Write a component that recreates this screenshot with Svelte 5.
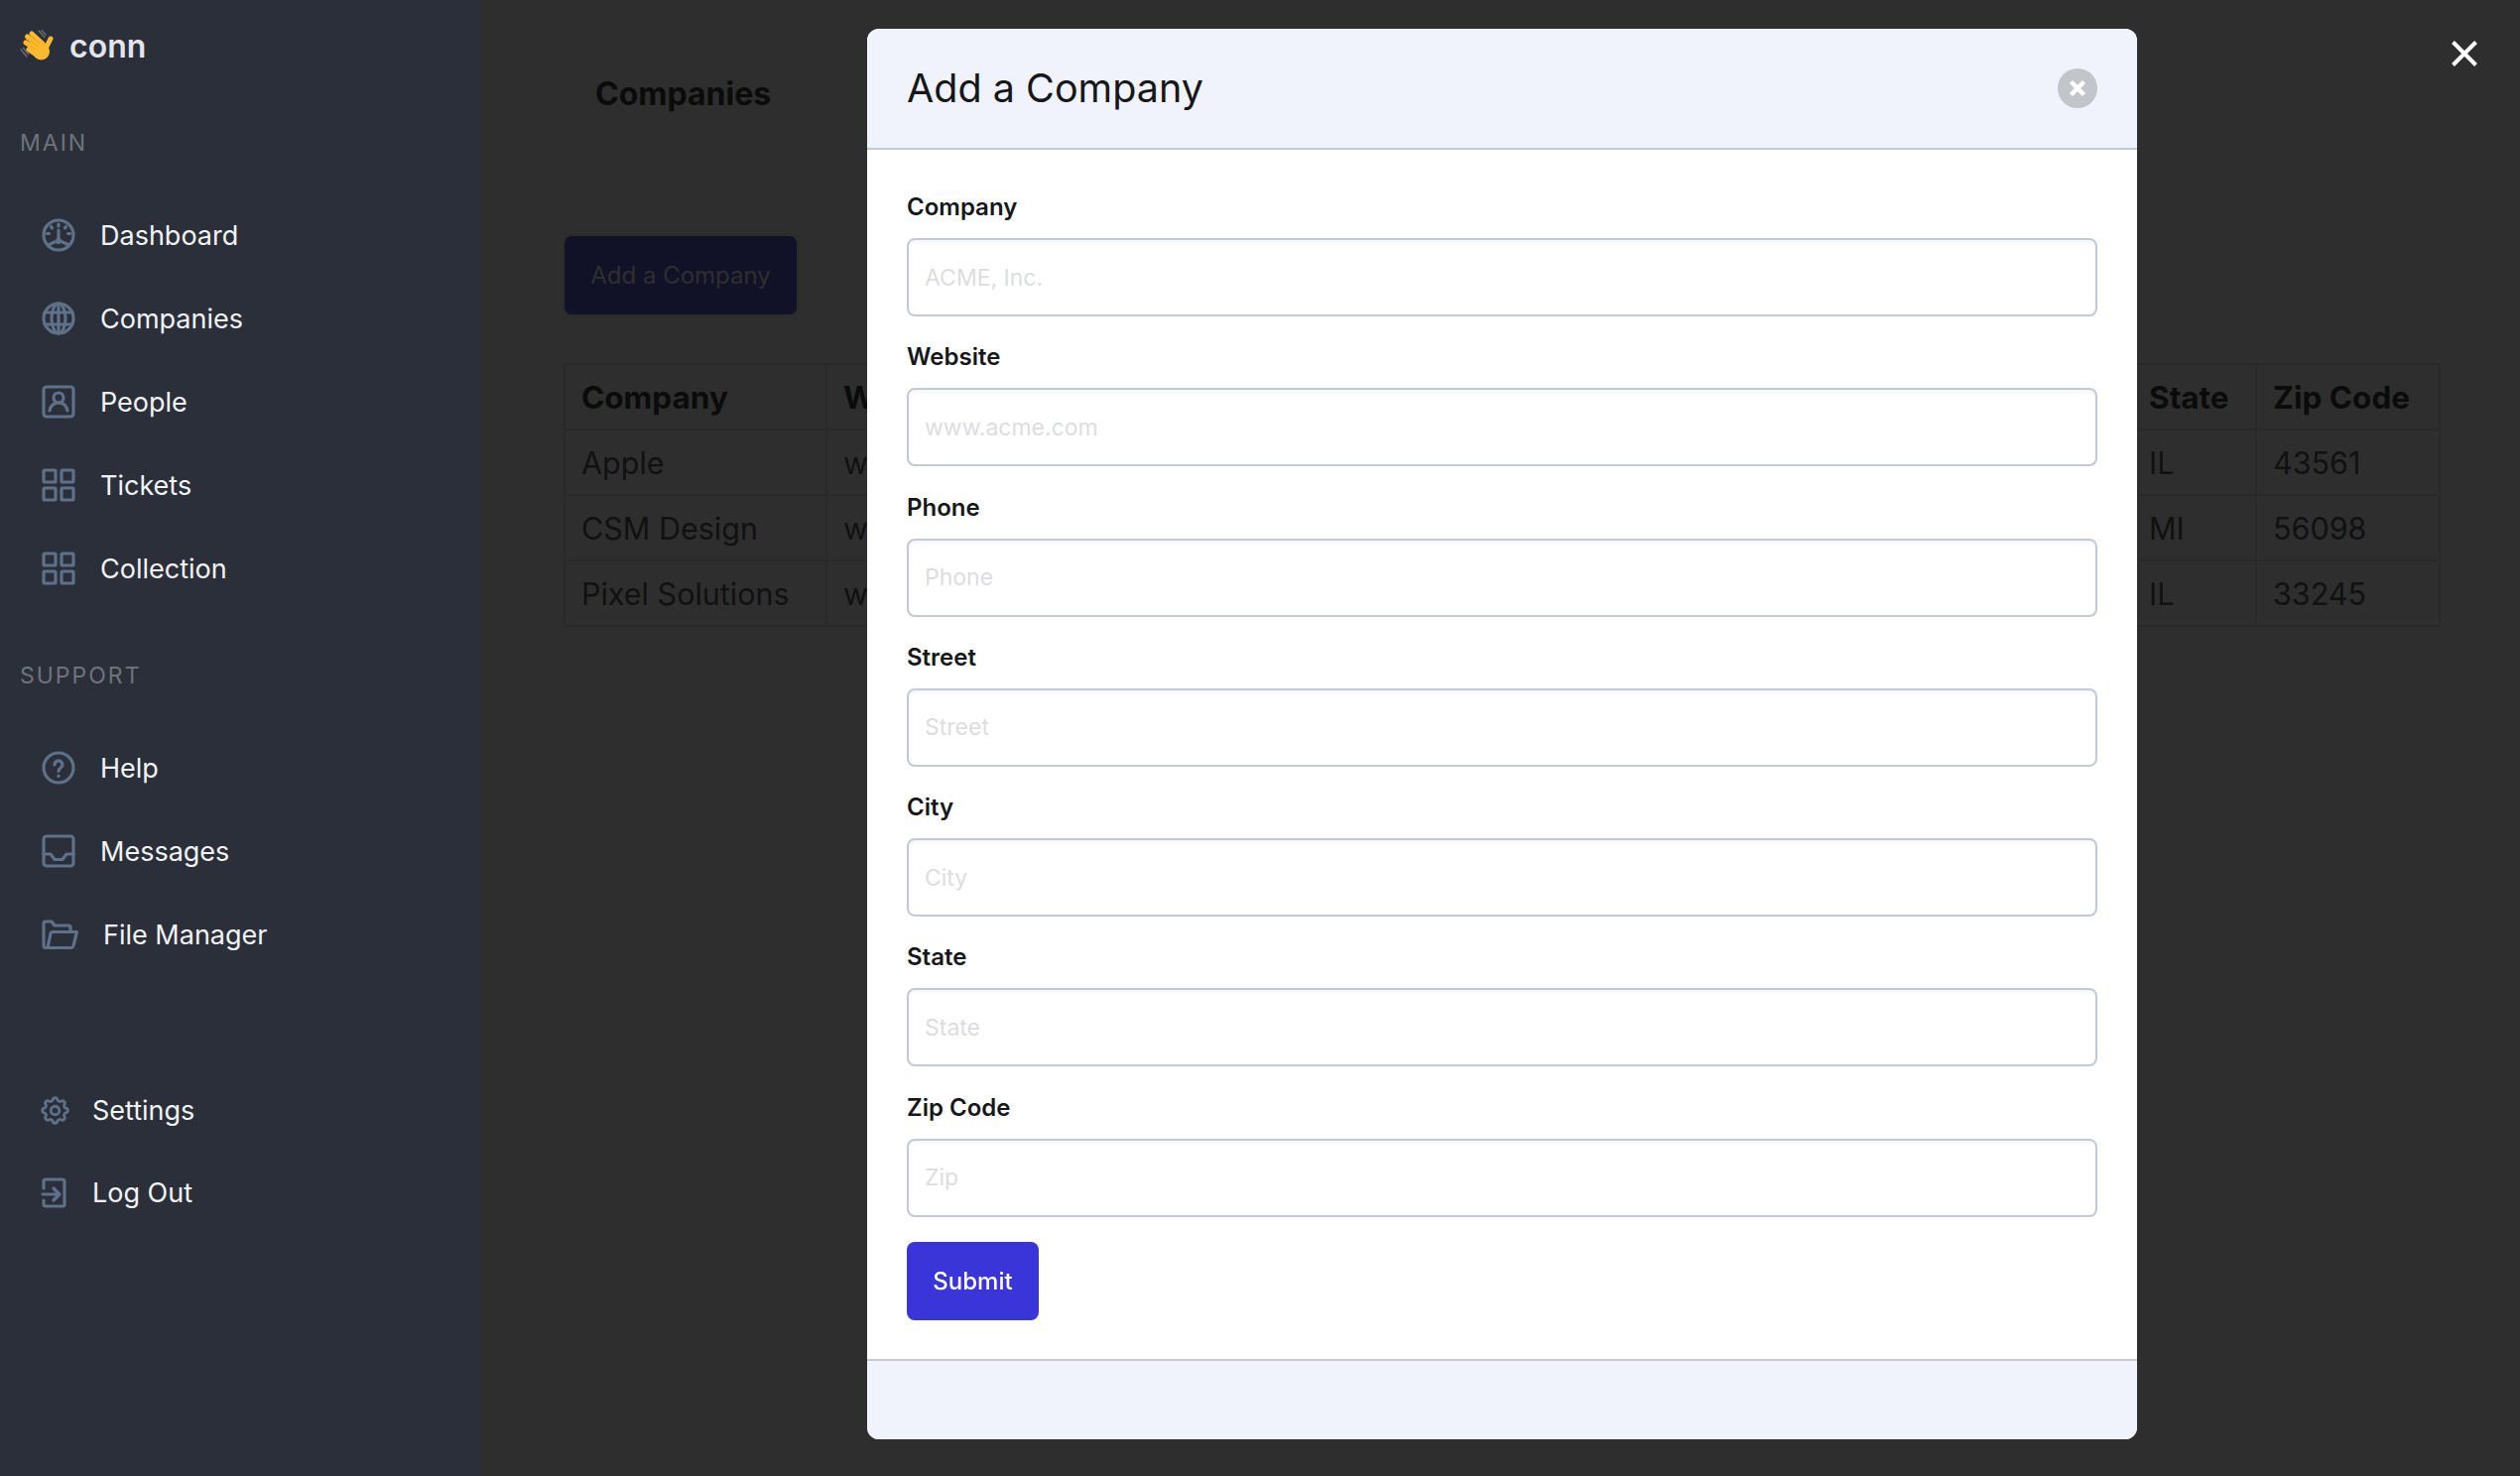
<script>
  const main = [
    { label: 'Dashboard', icon: 'dash' },
    { label: 'Companies', icon: 'globe' },
    { label: 'People', icon: 'person' },
    { label: 'Tickets', icon: 'grid' },
    { label: 'Collection', icon: 'grid' }
  ];
  const fields = [
    ['Company', 'ACME, Inc.'],
    ['Website', 'www.acme.com'],
    ['Phone', 'Phone'],
    ['Street', 'Street'],
    ['City', 'City'],
    ['State', 'State'],
    ['Zip Code', 'Zip']
  ];
  const rows = [
    ['Apple', 'www.apple.com', '555-1234', '1 Infinite Loop', 'Chicago', 'IL', '43561'],
    ['CSM Design', 'www.csm.com', '555-9876', '22 Main Street', 'Detroit', 'MI', '56098'],
    ['Pixel Solutions', 'www.pixel.com', '555-4567', '9 Lake Avenue', 'Peoria', 'IL', '33245']
  ];
  const heads = ['Company', 'Website', 'Phone', 'Street', 'City', 'State', 'Zip Code'];
</script>

{#snippet icon(name)}
  {#if name === 'dash'}
    <svg class="ico" viewBox="0 0 34 34"><circle cx="17" cy="17" r="15"/><path d="M17 12v10M6.500 27l6.500-3M27.500 27L21 24M17 6v2M9.500 8.500l1 1.500M24.500 8.500l-1 1.500M5.500 15.500h2M28.500 15.500h-2"/><circle cx="17" cy="23" r="1.500"/></svg>
  {:else if name === 'globe'}
    <svg class="ico" viewBox="0 0 34 34"><circle cx="17" cy="17" r="15"/><ellipse cx="17" cy="17" rx="7" ry="15"/><path d="M17 2v30M3 11h28M3 23h28"/></svg>
  {:else if name === 'person'}
    <svg class="ico" viewBox="0 0 34 34"><rect x="2" y="2" width="30" height="30" rx="3"/><circle cx="17" cy="13" r="5"/><path d="M8 26c1-5 4-8 9-8s8 3 9 8"/></svg>
  {:else if name === 'grid'}
    <svg class="ico" viewBox="0 0 34 34"><rect x="2" y="2" width="12" height="12" rx="1"/><rect x="20" y="2" width="12" height="12" rx="1"/><rect x="2" y="20" width="12" height="12" rx="1"/><rect x="20" y="20" width="12" height="12" rx="1"/></svg>
  {:else if name === 'help'}
    <svg class="ico" viewBox="0 0 34 34"><circle cx="17" cy="17" r="15"/><path d="M13 14c0-5.500 8-5.500 8 0 0 3-4 3-4 6.500"/><path d="M17 25v.5"/></svg>
  {:else if name === 'inbox'}
    <svg class="ico" viewBox="0 0 34 34"><rect x="2" y="2" width="30" height="30" rx="3"/><path d="M2 20h7l4 5.500h8l4-5.500h7"/></svg>
  {:else if name === 'folder'}
    <svg class="ico wide" viewBox="0 0 36 30"><path d="M6 28.500H4a2 2 0 0 1-2-2V4a2 2 0 0 1 2-2h6l3 4h14a2 2 0 0 1 2 2v4.500"/><path d="M6 28.500L9 14a2 2 0 0 1 2-1.500h24.500L32 26.500a2.500 2.500 0 0 1-2 2z"/></svg>
  {:else if name === 'cog'}
    <svg class="ico cog" viewBox="2.500 2.500 19 19"><path stroke-width="2" d="M10.325 4.317c.426-1.756 2.924-1.756 3.35 0a1.724 1.724 0 002.573 1.066c1.543-.94 3.31.826 2.37 2.37a1.724 1.724 0 001.065 2.572c1.756.426 1.756 2.924 0 3.35a1.724 1.724 0 00-1.066 2.573c.94 1.543-.826 3.31-2.37 2.37a1.724 1.724 0 00-2.572 1.065c-.426 1.756-2.924 1.756-3.35 0a1.724 1.724 0 00-2.573-1.066c-1.543.94-3.31-.826-2.37-2.37a1.724 1.724 0 00-1.065-2.572c-1.756-.426-1.756-2.924 0-3.35a1.724 1.724 0 001.066-2.573c-.94-1.543.826-3.31 2.37-2.37.996.608 2.296.07 2.572-1.065z"/><path stroke-width="2" d="M15 12a3 3 0 11-6 0 3 3 0 016 0z"/></svg>
  {:else if name === 'logout'}
    <svg class="ico small" viewBox="0 0 27 31" preserveAspectRatio="xMinYMid"><path d="M2 11V4a2 2 0 0 1 2-2h17a2 2 0 0 1 2 2v23a2 2 0 0 1-2 2H4a2 2 0 0 1-2-2v-4"/><path d="M1 17h17M12 11l6 6-6 6"/></svg>
  {/if}
{/snippet}

<div class="page">
  <aside class="sidebar">
    <div class="brand">
      <svg class="hand" viewBox="0 0 34 32">
        <g fill="none" stroke="#666b72" stroke-width="1.500" stroke-linecap="round">
          <path d="M1 20l6 7M3.500 18.500l5 6M19 1l6 6.500M22 .5l4 4.500"/>
        </g>
        <g fill="none" stroke="#fbb92f" stroke-width="5" stroke-linecap="round">
          <path d="M23 14L12 4M21.500 19L7.500 7M18 21L6 13M18 26l-9-6M25 21l6-12"/>
        </g>
        <circle cx="21.500" cy="22" r="8.500" fill="#fbb92f"/>
        <g fill="none" stroke="#e79a1e" stroke-width=".8" stroke-linecap="round">
          <path d="M20 13.500L12 6.500M18 16.500L9 9.500M15.500 19.500L8.500 15"/>
        </g>
      </svg>
      <span>conn</span>
    </div>
    <p class="heading first">MAIN</p>
    <ul class="menu">
      {#each main as m}
        <li>{@render icon(m.icon)}<span>{m.label}</span></li>
      {/each}
    </ul>
    <p class="heading second">SUPPORT</p>
    <ul class="menu">
      <li>{@render icon('help')}<span>Help</span></li>
      <li>{@render icon('inbox')}<span>Messages</span></li>
      <li class="fm">{@render icon('folder')}<span>File Manager</span></li>
    </ul>
    <ul class="menu bottom">
      <li>{@render icon('cog')}<span>Settings</span></li>
      <li>{@render icon('logout')}<span>Log Out</span></li>
    </ul>
  </aside>

  <main class="content">
    <h1>Companies</h1>
    <button class="add">Add a Company</button>
    <table>
      <colgroup>
        <col class="c1" /><col class="c2" /><col class="c3" /><col class="c4" /><col class="c5" /><col class="c6" /><col class="c7" />
      </colgroup>
      <thead><tr>{#each heads as h}<th>{h}</th>{/each}</tr></thead>
      <tbody>
        {#each rows as r}
          <tr>{#each r as c}<td>{c}</td>{/each}</tr>
        {/each}
      </tbody>
    </table>
  </main>
</div>

<div class="overlay">
  <section class="modal">
    <header class="mhead">
      <h2>Add a Company</h2>
      <button class="delete" aria-label="close">
        <svg viewBox="0 0 40 40"><path d="M13.500 13.500l13 13M26.500 13.500l-13 13"/></svg>
      </button>
    </header>
    <form class="mbody">
      {#each fields as f}
        <div class="field">
          <label for={f[0]}>{f[0]}</label>
          <input id={f[0]} placeholder={f[1]} />
        </div>
      {/each}
      <button type="button" class="submit">Submit</button>
    </form>
    <footer class="mfoot"></footer>
  </section>
  <button class="close" aria-label="close">
    <svg viewBox="0 0 26 26"><path d="M1.500 1.500l23 23M24.500 1.500l-23 23"/></svg>
  </button>
</div>

<style>
  :global(body) {
    margin: 0;
    font-family: Inter, "Noto Sans", sans-serif;
    background: #fff;
  }
  .page {
    display: flex;
    height: 1488px;
    overflow: hidden;
  }
  .sidebar {
    position: relative;
    z-index: 30;
    width: 484px;
    flex: none;
    background: #2a2f3a;
    padding: 26px 0 0 20px;
    box-sizing: border-box;
  }
  .brand {
    display: flex;
    align-items: center;
    height: 40px;
    gap: 16px;
    color: #e2e5ea;
    font-weight: 600;
    font-size: 32px;
  }
  .hand { width: 34px; height: 32px; flex: none; overflow: visible; }
  .heading {
    margin: 0;
    color: #6f737a;
    font-size: 23px;
    letter-spacing: 2px;
    line-height: 30px;
  }
  .first { margin-top: 63px; }
  .second { margin-top: 51px; }
  .menu {
    list-style: none;
    margin: 36px 0 0 22px;
    padding: 0;
  }
  .menu li {
    display: flex;
    align-items: center;
    height: 84px;
    gap: 25px;
    color: #f1f3f5;
    font-size: 27px;
  }
  .ico {
    width: 34px;
    height: 34px;
    flex: none;
    fill: none;
    stroke: #5f7189;
    stroke-width: 3.200;
    stroke-linecap: round;
    stroke-linejoin: round;
    overflow: visible;
  }
  .ico.wide { width: 36px; height: 30px; }
  .ico.cog { width: 27px; height: 27px; }
  .ico.small { width: 27px; height: 31px; }
  .menu li.fm { gap: 26px; }
  .bottom { margin-top: 94px; }
  .bottom li { height: 83px; gap: 24px; }

  .content {
    flex: 1;
    padding: 73px 81px 0 84px;
    min-width: 0;
  }
  h1 {
    margin: 0 0 0 32px;
    font-size: 32px;
    line-height: 44px;
    font-weight: 700;
    color: #0a0a0a;
  }
  .add {
    display: block;
    margin: 118px 0 0 -2px;
    width: 240px;
    height: 85px;
    background: #3a35d9;
    color: #fff;
    border: 3px solid #f0f0f6;
    border-radius: 10px;
    font: 24px Inter, sans-serif;
    padding: 0;
  }
  table {
    margin-top: 46px;
    width: 1890px;
    table-layout: fixed;
    border-collapse: collapse;
    color: #363636;
    font-size: 30.500px;
  }
  .c1 { width: 264px; }
  .c2 { width: 350px; }
  .c3 { width: 280px; }
  .c4 { width: 436px; }
  .c5 { width: 250px; }
  .c6 { width: 125px; }
  .c7 { width: 185px; }
  th, td {
    border: 2px solid #dbdbdb;
    height: 66px;
    padding: 0 16px;
    text-align: left;
    box-sizing: border-box;
    white-space: nowrap;
    overflow: hidden;
  }
  th { font-weight: 700; color: #0a0a0a; font-size: 31.500px; }

  .overlay {
    position: fixed;
    inset: 0;
    z-index: 20;
    background: rgba(10, 12, 11, .86);
  }
  .modal {
    position: absolute;
    left: 874px;
    top: 29px;
    width: 1280px;
    height: 1422px;
    display: flex;
    flex-direction: column;
    border-radius: 12px;
    overflow: hidden;
    background: #fff;
  }
  .mhead {
    display: flex;
    align-items: center;
    justify-content: space-between;
    height: 122px;
    padding: 0 40px;
    box-sizing: border-box;
    background: #f0f3fb;
    border-bottom: 2px solid #c3c9d8;
  }
  h2 {
    margin: 0;
    font-size: 39.500px;
    font-weight: 400;
    color: #16171a;
  }
  .delete {
    width: 40px;
    height: 40px;
    padding: 0;
    border: 0;
    border-radius: 50%;
    background: #c2c5c9;
  }
  .delete svg { display: block; fill: none; stroke: #fff; stroke-width: 4.500; }
  .mbody {
    flex: 1;
    padding: 43px 40px 0;
  }
  .field { margin-bottom: 26.250px; }
  .field:last-of-type { margin-bottom: 25px; }
  label {
    display: block;
    font-size: 24px;
    line-height: 30px;
    font-weight: 600;
    color: #16171a;
    margin-bottom: 16px;
  }
  input {
    display: block;
    width: 1200px;
    height: 79px;
    box-sizing: border-box;
    padding: 0 16px;
    border: 2.500px solid #c3c9d8;
    border-radius: 8px;
    box-shadow: inset 0 2px 4px rgba(10, 10, 10, .05);
    font: 23px Inter, sans-serif;
    outline: none;
  }
  input::placeholder { color: #dcdde0; opacity: 1; }
  .submit {
    display: block;
    width: 133px;
    height: 79px;
    padding: 0;
    border: 0;
    border-radius: 8px;
    background: #3a35d9;
    color: #fff;
    font: 500 24px Inter, sans-serif;
  }
  .mfoot {
    height: 81px;
    flex: none;
    background: #f0f3fb;
    border-top: 2px solid #c3c9d8;
    box-sizing: border-box;
  }
  .close {
    position: absolute;
    left: 2471px;
    top: 41px;
    width: 26px;
    height: 26px;
    padding: 0;
    border: 0;
    background: none;
  }
  .close svg { display: block; fill: none; stroke: #fff; stroke-width: 4; }
</style>
